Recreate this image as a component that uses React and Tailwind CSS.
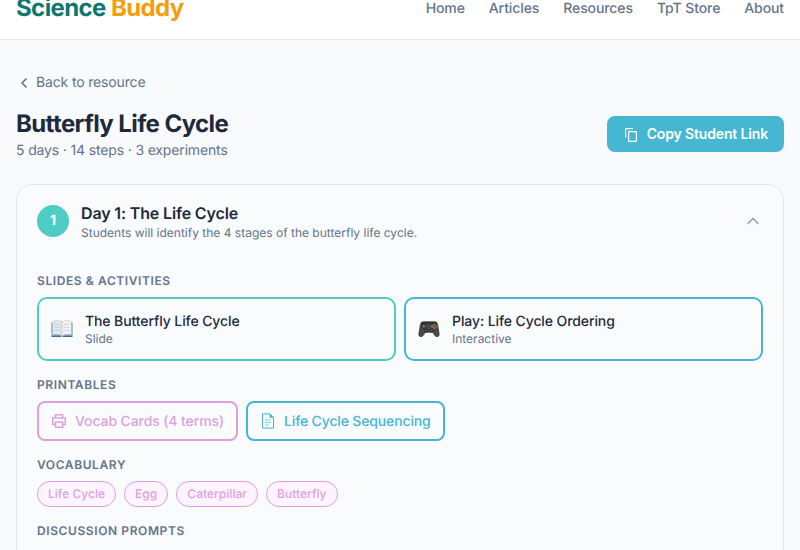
import { ChevronLeft, ChevronUp } from "lucide-react"

const BookIcon = () => (
  <svg width="22" height="20" viewBox="0 0 22 20" className="shrink-0">
    <path d="M0.5 3.5H21.5V16.5H0.5Z" fill="#5b89ad" />
    <path d="M1.5 2.5C4.5 1 8.5 1.2 11 3V17C8.5 15.4 4.5 15.2 1.5 16Z" fill="#e4e8ee" stroke="#b4bcc6" strokeWidth="0.5" />
    <path d="M20.5 2.5C17.5 1 13.5 1.2 11 3V17C13.5 15.4 17.5 15.2 20.5 16Z" fill="#f0f2f5" stroke="#b4bcc6" strokeWidth="0.5" />
    <path d="M3.5 5.5C5.5 5 7.5 5.2 9.5 6M3.5 8.5C5.5 8 7.5 8.2 9.5 9M3.5 11.5C5.5 11 7.5 11.2 9.5 12M12.5 6C14.5 5.2 16.5 5 18.5 5.5M12.5 9C14.5 8.2 16.5 8 18.5 8.5M12.5 12C14.5 11.2 16.5 11 18.5 11.5" stroke="#bcc3cc" strokeWidth="0.7" fill="none" />
    <path d="M0.5 16.5H9.5L11 18L12.5 16.5H21.5V18H0.5Z" fill="#3f6f94" />
  </svg>
)

const GamepadIcon = () => (
  <svg width="22" height="20" viewBox="0 0 24 20" className="shrink-0">
    <path d="M6 1.5H18C20 1.5 21.5 3 22 5.5L23.5 15C23.8 17.5 22.5 19 20.5 18.8C19 18.6 17.5 16.5 16 14H8C6.5 16.5 5 18.6 3.5 18.8C1.5 19 0.2 17.5 0.5 15L2 5.5C2.5 3 4 1.5 6 1.5Z" fill="#4a4a48" />
    <path d="M5 2.5H19C20 2.5 20.5 3.5 21 4.5H3C3.5 3.5 4 2.5 5 2.5Z" fill="#2f2f2e" />
    <circle cx="6.5" cy="7" r="2.6" fill="#262626" />
    <path d="M5.8 5.2H7.2V6.3H8.3V7.7H7.2V8.8H5.8V7.7H4.7V6.3H5.8Z" fill="#777" />
    <circle cx="9" cy="11.5" r="2.2" fill="#2a2a2a" />
    <circle cx="15" cy="11.5" r="2.2" fill="#2a2a2a" />
    <circle cx="9" cy="11.5" r="1" fill="#6b6b6b" />
    <circle cx="15" cy="11.5" r="1" fill="#6b6b6b" />
    <circle cx="17.5" cy="5.3" r="1.1" fill="#e2571e" />
    <circle cx="19.8" cy="7.2" r="1.1" fill="#d9691f" />
    <circle cx="15.5" cy="7.2" r="1.1" fill="#8a8a88" />
    <circle cx="17.5" cy="9" r="1.1" fill="#8a8a88" />
  </svg>
)

const CopyIcon = () => (
  <svg width="16" height="16" viewBox="0 0 16 16" fill="none" stroke="currentColor" strokeWidth="1.2" className="shrink-0">
    <path d="M2.6 11.5V2.6H10" />
    <rect x="5.6" y="5.6" width="7.8" height="9.8" rx="0.6" />
  </svg>
)

const PrinterIcon = () => (
  <svg width="16" height="16" viewBox="0 0 16 16" fill="none" stroke="currentColor" strokeWidth="1.5" className="shrink-0">
    <path d="M4.5 5V1.75H11.5V5" />
    <path d="M4 11.5H1.75V5H14.25V11.5H12" />
    <path d="M4.5 9H11.5V14.25H4.5Z" />
  </svg>
)

const FileIcon = () => (
  <svg width="16" height="16" viewBox="0 0 16 16" fill="none" stroke="currentColor" className="shrink-0">
    <path d="M2.5 0.9H10L13.5 4.4V15.1H2.5Z" strokeWidth="1" />
    <path d="M10 0.9V4.4H13.5Z" fill="currentColor" strokeWidth="0.6" />
    <path d="M5 7H11M5 9.5H11M5 12H9" strokeWidth="1" opacity="0.6" />
  </svg>
)

const navLinks = ["Home", "Articles", "Resources", "TpT Store", "About"]
const vocab = ["Life Cycle", "Egg", "Caterpillar", "Butterfly"]

const SectionLabel = ({ children }) => (
  <h4 className="text-xs leading-4 font-semibold tracking-[0.6px] uppercase text-[#64748b] mb-2">{children}</h4>
)

const ActivityCard = ({ icon, title, kind, border }) => (
  <div className={`flex items-center gap-3 h-16 px-3 rounded-[10px] border-2 ${border}`}>
    {icon}
    <div>
      <div className="text-sm leading-5 font-medium tracking-[-0.1px] translate-y-px text-[#1e293b]">{title}</div>
      <div className="text-xs leading-4 text-[#64748b]">{kind}</div>
    </div>
  </div>
)

export default function App() {
  return (
    <div className="h-[550px] overflow-hidden bg-[#f8fafc] text-[#1e293b] font-['Inter',sans-serif] [text-rendering:geometricPrecision]">
      {/* page was captured scrolled down a bit */}
      <div className="-mt-6">
        <header className="h-16 bg-white border-b border-[#e2e8f0] px-4 flex items-center justify-between">
          <div className="text-2xl font-bold tracking-tight">
            <span className="text-[#0f766e]">Science </span>
            <span className="text-[#f59e0b]">Buddy</span>
          </div>
          <nav className="flex gap-6 pt-0.5">
            {navLinks.map((link) => (
              <a key={link} className="text-sm font-medium tracking-[-0.1px] text-[#64748b]">{link}</a>
            ))}
          </nav>
        </header>

        <main className="px-4 pt-8">
          <a className="flex items-center gap-1 h-[22px] text-sm tracking-[-0.15px] text-[#64748b]">
            <ChevronLeft size={16} strokeWidth={2.5} />
            Back to resource
          </a>

          <div className="flex items-center justify-between mt-[14px] mb-[22px]">
            <div>
              <h1 className="text-2xl leading-8 font-bold tracking-tight">Butterfly Life Cycle</h1>
              <p className="text-sm leading-[22px] tracking-[-0.15px] text-[#64748b]">5 days · 14 steps · 3 experiments</p>
            </div>
            <button className="flex items-center gap-2 h-9 mb-0.5 px-4 rounded-lg bg-[#45b7d1] text-white text-sm font-semibold tracking-[-0.15px]">
              <CopyIcon />
              Copy Student Link
            </button>
          </div>

          <section className="rounded-2xl border border-[#e2e8f0] bg-[#fafbfd] px-5 pt-5 pb-10">
            <div className="flex items-center gap-3 h-8">
              <div className="w-8 h-8 rounded-full bg-[#4ecdc4] text-white text-sm font-bold flex items-center justify-center">1</div>
              <div className="flex-1">
                <h3 className="text-base leading-6 font-semibold tracking-[-0.15px]">Day 1: The Life Cycle</h3>
                <p className="text-xs leading-4 text-[#64748b]">Students will identify the 4 stages of the butterfly life cycle.</p>
              </div>
              <ChevronUp size={20} strokeWidth={2} className="text-[#94a3b8]" />
            </div>

            <div className="mt-9">
              <SectionLabel>Slides &amp; Activities</SectionLabel>
              <div className="grid grid-cols-2 gap-2 mb-4">
                <ActivityCard icon={<BookIcon />} title="The Butterfly Life Cycle" kind="Slide" border="border-[#4ecdc4]" />
                <ActivityCard icon={<GamepadIcon />} title="Play: Life Cycle Ordering" kind="Interactive" border="border-[#45b7d1]" />
              </div>

              <SectionLabel>Printables</SectionLabel>
              <div className="flex gap-2 mb-4">
                <a className="flex items-center gap-2 h-10 px-3 rounded-lg border-2 border-[#dda0dd] text-sm font-medium tracking-[-0.1px] text-[#dda0dd]">
                  <PrinterIcon />
                  <span className="pt-0.5">Vocab Cards (4 terms)</span>
                </a>
                <a className="flex items-center gap-2 h-10 px-3 rounded-lg border-2 border-[#45b7d1] text-sm font-medium tracking-[-0.15px] text-[#45b7d1]">
                  <FileIcon />
                  <span className="pt-0.5">Life Cycle Sequencing</span>
                </a>
              </div>

              <SectionLabel>Vocabulary</SectionLabel>
              <div className="flex gap-2 mb-4">
                {vocab.map((word) => (
                  <span key={word} className="h-[26px] px-2.5 flex items-center rounded-full border border-[#dda0dd] bg-[#fdf4ff] text-xs font-medium tracking-[0.03px] text-[#dda0dd]">{word}</span>
                ))}
              </div>

              <SectionLabel>Discussion Prompts</SectionLabel>
            </div>
          </section>
        </main>
      </div>
    </div>
  )
}
